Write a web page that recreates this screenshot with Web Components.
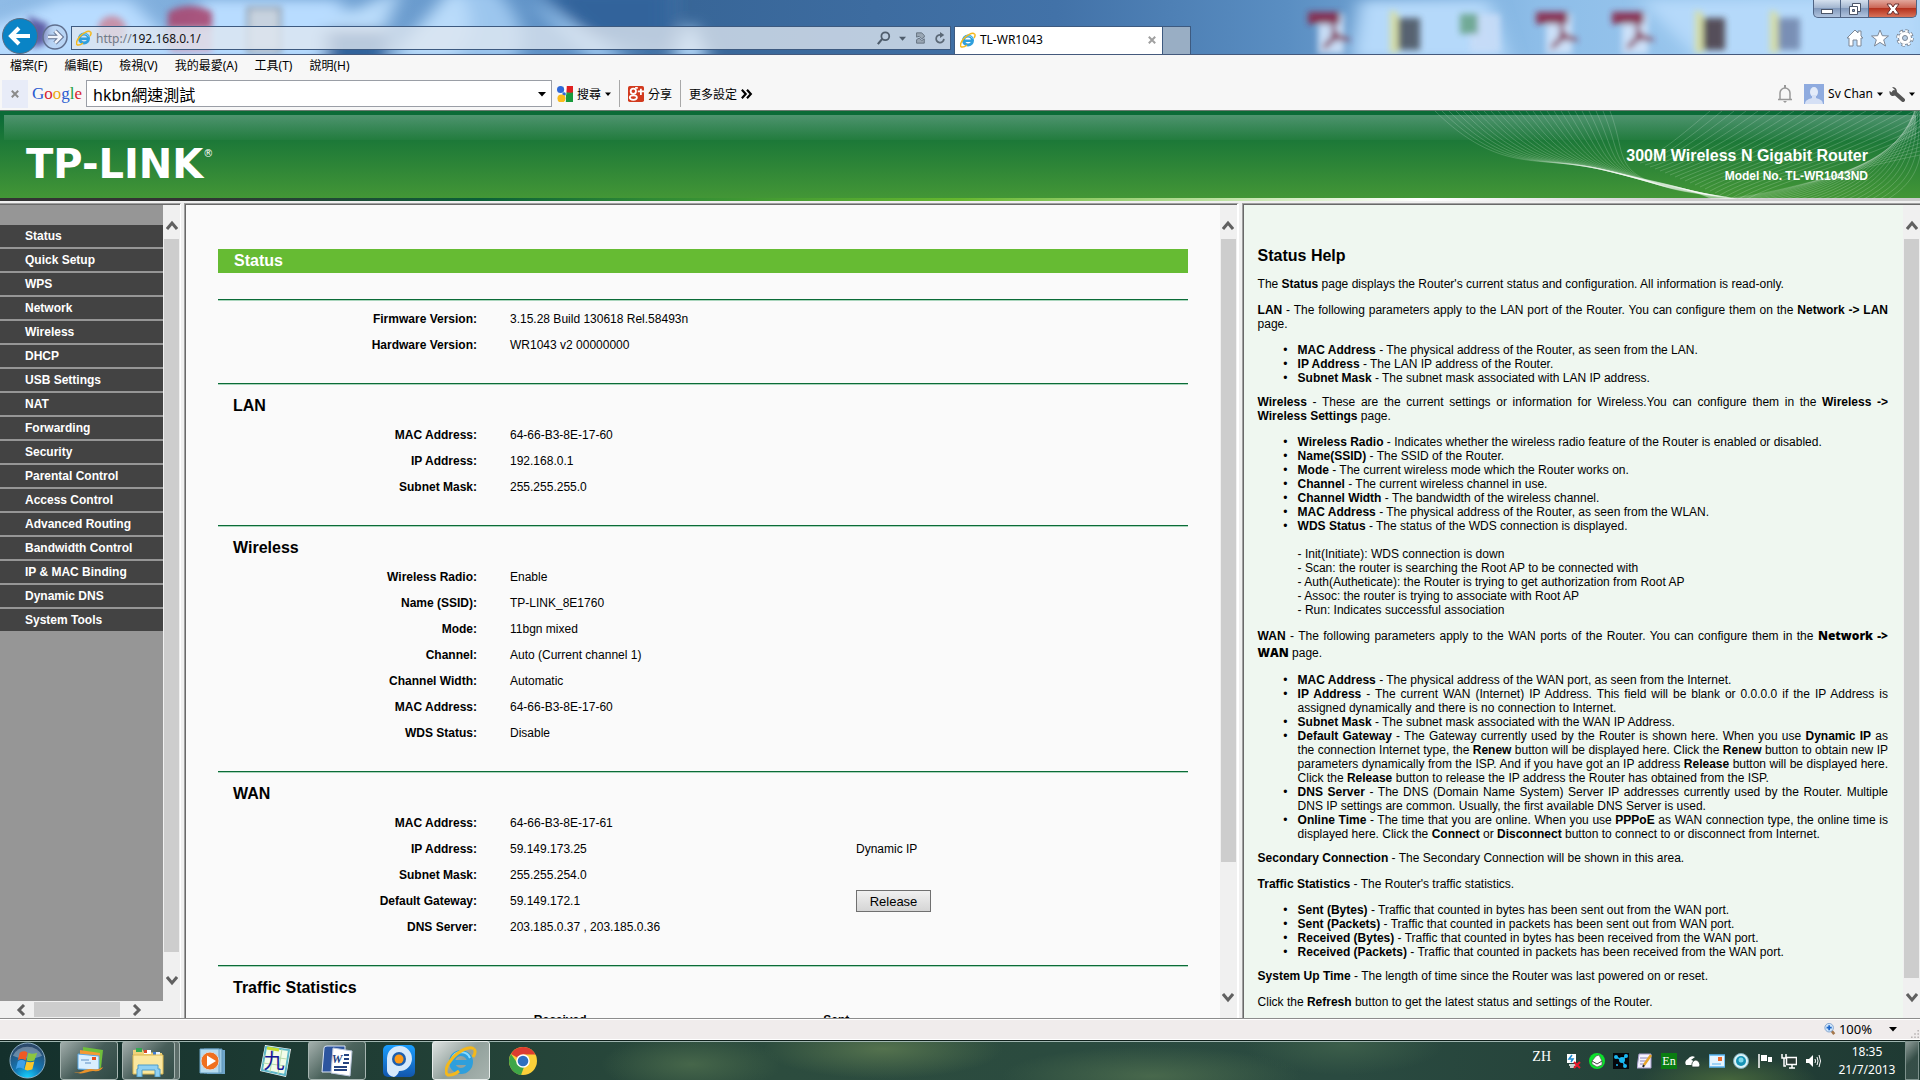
<!DOCTYPE html>
<html lang="zh-Hant">
<head>
<meta charset="utf-8">
<title>TL-WR1043</title>
<style>
  body {
    margin: 0;
    height: 100vh;
    display: flex;
    flex-direction: column;
    overflow: hidden;
    background: #f0f0f0;
    color: #000;
    font: 12px "Liberation Sans", "Noto Sans CJK TC", sans-serif;
    --ui: "Noto Sans", "Noto Sans CJK TC", sans-serif;
  }
  .frames {
    flex: 1;
    min-height: 0;
    display: flex;
    gap: 3px;
    padding-top: 2px;
  }
  .nav-frame { flex: 0 0 181px; }
  .main-frame { flex: 1054 1 0; border-right: 2px solid #fff; }
  .help-frame { flex: 679 1 0; }
</style>
</head>
<body>
  <browser-titlebar url="192.168.0.1/" tab="TL-WR1043"></browser-titlebar>
  <menu-bar items="檔案(F),編輯(E),檢視(V),我的最愛(A),工具(T),說明(H)"></menu-bar>
  <google-toolbar query="hkbn網速測試" user="Sv Chan"></google-toolbar>
  <router-banner>
    <span slot="name">300M Wireless N Gigabit Router</span>
    <span slot="model">Model No. TL-WR1043ND</span>
  </router-banner>

  <div class="frames">
    <page-frame class="nav-frame" plain horizontal thumb="713" rest="15">
      <side-menu items="Status,Quick Setup,WPS,Network,Wireless,DHCP,USB Settings,NAT,Forwarding,Security,Parental Control,Access Control,Advanced Routing,Bandwidth Control,IP &amp; MAC Binding,Dynamic DNS,System Tools"></side-menu>
    </page-frame>

    <page-frame class="main-frame" thumb="623" rest="122">
      <status-page heading="Status">
        <status-section rows='[["Firmware Version:","3.15.28 Build 130618 Rel.58493n"],["Hardware Version:","WR1043 v2 00000000"]]'></status-section>
        <status-section heading="LAN" rows='[["MAC Address:","64-66-B3-8E-17-60"],["IP Address:","192.168.0.1"],["Subnet Mask:","255.255.255.0"]]'></status-section>
        <status-section heading="Wireless" rows='[["Wireless Radio:","Enable"],["Name (SSID):","TP-LINK_8E1760"],["Mode:","11bgn mixed"],["Channel:","Auto (Current channel 1)"],["Channel Width:","Automatic"],["MAC Address:","64-66-B3-8E-17-60"],["WDS Status:","Disable"]]'></status-section>
        <status-section heading="WAN" rows='[["MAC Address:","64-66-B3-8E-17-61"],["IP Address:","59.149.173.25","Dynamic IP"],["Subnet Mask:","255.255.254.0"],["Default Gateway:","59.149.172.1","Release","button"],["DNS Server:","203.185.0.37 , 203.185.0.36"]]'></status-section>
        <status-section heading="Traffic Statistics">
          <traffic-table></traffic-table>
        </status-section>
      </status-page>
    </page-frame>

    <page-frame class="help-frame" thumb="739" rest="6">
      <help-page></help-page>
    </page-frame>
  </div>

  <status-bar zoom="100%"></status-bar>
  <task-bar time="18:35" date="21/7/2013"></task-bar>

<script>
const IE = `<ellipse cx="16" cy="17" rx="9" ry="9" fill="none" stroke="#2f9fdc" stroke-width="6"/>
  <path d="M8 17.500H26" stroke="#2f9fdc" stroke-width="5"/>
  <path d="M7 14a9.500 9 0 0 1 18-1" fill="none" stroke="#8bdcff" stroke-width="2"/>
  <path d="M29 4C25 0 13 6 6 15S0 31 5 30c4 0 9-4 9-4" fill="none" stroke="#f4b81c" stroke-width="3"/>
  <path d="M29 4c2 2 1 5-1 8" fill="none" stroke="#f4b81c" stroke-width="3"/>`;

// name: [viewBox size, markup]
const ICONS = {
  ie: [32, IE],
  back: [36, `<circle cx="18" cy="18" r="17.500" fill="#0a84c6" stroke="#5b6b80"/><path d="M28 18H10M17 10l-8 8 8 8" fill="none" stroke="#fff" stroke-width="4"/>`],
  forward: [26, `<circle cx="13" cy="13" r="12" fill="#b9cbe6" fill-opacity=".4" stroke="#5f6f8e" stroke-width="1.500"/><path d="M6 13h13M13 7l6 6-6 6" fill="none" stroke="#5f6f8e" stroke-width="4.500"/><path d="M6 13h12M13 7l6 6-6 6" fill="none" stroke="#eef3fb" stroke-width="2.500"/>`],
  search: [16, `<circle cx="9.500" cy="6" r="4.500" fill="none" stroke="#4f5d6c" stroke-width="2"/><path d="M6 9l-5 6" stroke="#4f5d6c" stroke-width="2.500"/>`],
  down: [8, `<path d="M0 2h8L4 6.500z" fill="currentColor"/>`],
  compat: [14, `<path d="M3 6V1h6l3 3v2l-3 2-3-3zM3 13V9l3-2 3 3 3-2v5z" fill="#9aa7b5" stroke="#5d6b79"/>`],
  refresh: [14, `<path d="M11.500 8A4.500 4.500 0 1 1 8 3.500" fill="none" stroke="#5b6876" stroke-width="2"/><path d="M7 0l5 3.500L7 7z" fill="#5b6876"/>`],
  close: [10, `<path d="M1 1l8 8M9 1L1 9" stroke="currentColor" stroke-width="2.500"/>`],
  home: [18, `<path d="M1 9l8-8 3 3V2h3v5l2 2h-2v8h-4v-6H7v6H3V9z" fill="#fff" stroke="#7c8796"/>`],
  star: [18, `<path d="M9 1l2.300 5.700 6.200.3-4.800 3.800L14.500 17 9 13.400 3.500 17l1.800-6.200L.5 7l6.200-.3z" fill="#fff" stroke="#7c8796"/>`],
  gear: [18, `<circle cx="9" cy="9" r="7" fill="none" stroke="#7c8796" stroke-width="3.500" stroke-dasharray="3.300 2.200"/><circle cx="9" cy="9" r="6.500" fill="#fff" stroke="#7c8796"/><circle cx="9" cy="9" r="7" fill="none" stroke="#fff" stroke-width="2" stroke-dasharray="2.500 3"/><circle cx="9" cy="9" r="2.500" fill="#b9cfe6" stroke="#7c8796"/>`],
  min: [14, `<rect x="1.500" y="7.500" width="11" height="4" fill="#fff" stroke="#4b5568"/>`],
  restore: [14, `<path d="M4.500 1.500h8v8h-8z" fill="#fff" stroke="#4b5568"/><path d="M1.500 4.500h8v8h-8z" fill="#fff" stroke="#4b5568"/><path d="M4.500 7.500h2v2h-2z" fill="#8fa6c4" stroke="#4b5568"/>`],
  closewin: [14, `<path d="M1 2h4l2 3 2-3h4L9.500 7l3.500 5H9L7 9l-2 3H1l3.500-5z" fill="#fff" stroke="#6b3030"/>`],
  gsearch: [18, `<rect x="7" width="11" height="18" rx="1" fill="#2a9e46"/><path d="M8 0h10v8l-8-1z" fill="#e02020"/><path d="M7 0h4l-1 18H7z" fill="#fff"/><circle cx="4" cy="4" r="4" fill="#2f68d8"/><circle cx="8" cy="9" r="2" fill="#2f68d8"/><circle cx="5" cy="14" r="4.500" fill="#fbbc1c"/><path d="M10 10l8-3v11h-8z" fill="#189a3c"/>`],
  gplus: [18, `<rect width="18" height="18" rx="2" fill="#d23a1e"/><circle cx="6" cy="6" r="3" fill="none" stroke="#fff" stroke-width="2"/><ellipse cx="6" cy="13" rx="4" ry="2.500" fill="none" stroke="#fff" stroke-width="2"/><path d="M8 2h3M11 6h7M14.500 3v7" stroke="#fff" stroke-width="2"/>`],
  bell: [18, `<path d="M2 14.500h14M4 14V8a5 5 0 0 1 10 0v6" fill="none" stroke="#999" stroke-width="1.500"/><path d="M9 0v3" stroke="#999" stroke-width="2"/><path d="M7 16h4l-2 2z" fill="#999"/>`],
  avatar: [20, `<path d="M0 0h20v20H0z" fill="#8fabdf"/><ellipse cx="10" cy="8" rx="4" ry="5" fill="#e3ebf9"/><path d="M1 20c0-4 4-5 7-6v-3h4v3c3 1 7 2 7 6z" fill="#d5e0f5"/>`],
  wrench: [16, `<path d="M5 6l9 8" stroke="#555" stroke-width="4" stroke-linecap="round"/><path d="M3 1l3 3-2 3-3.500-2C0 9 3 11 6 9.500S9 1 3 1z" fill="#555"/>`],
  more: [14, `<path d="M1 2l4.500 5L1 12M7 2l4.500 5L7 12" fill="none" stroke="#000" stroke-width="2.500"/>`],
  up: [12, `<path d="M1 9l5-6 5 6" fill="none" stroke="#606060" stroke-width="3"/>`],
  dn: [12, `<path d="M1 3l5 6 5-6" fill="none" stroke="#606060" stroke-width="3"/>`],
  left: [12, `<path d="M9 1L4 6l5 5" fill="none" stroke="#606060" stroke-width="3"/>`],
  right: [12, `<path d="M3 1l5 5-5 5" fill="none" stroke="#606060" stroke-width="3"/>`],
  zoom: [14, `<path d="M8 8l4 5" stroke="#a5784c" stroke-width="3"/><circle cx="6" cy="5.500" r="5" fill="#cfe6fb" stroke="#7a9cc8"/><path d="M3 5.500h6M6 2.500v6" stroke="#1e66c8" stroke-width="2"/>`],
  grip: [10, `<g fill="#b8b4b4"><path d="M8 0h2v2H8zM4 4h2v2H4zM8 4h2v2H8zM0 8h2v2H0zM4 8h2v2H4zM8 8h2v2H8z"/></g>`],
  start: [38, `<defs><radialGradient id="o" cx=".5" cy="1" r=".9"><stop offset="0" stop-color="#16d4ff"/><stop offset=".45" stop-color="#1377b5"/><stop offset="1" stop-color="#2b4a6c"/></radialGradient></defs><circle cx="19" cy="19" r="18" fill="url(#o)" stroke="#8fb2c8"/><path d="M4 14a16 14 0 0 1 30 0c-8 4-22 4-30 0z" fill="#fff" opacity=".3"/><path d="M11 11c3-2 6-2 8 0l-2 8c-3-2-5-2-8 0z" fill="#ee5a24"/><path d="M20 11c3 2 6 1 9 0l-3 8c-3 1-5 1-8 0z" fill="#8cc63f"/><path d="M9 20c3-2 5-2 8 0l-2 8c-3-2-5-2-8 0z" fill="#3fa0e8"/><path d="M18 20c3 1 5 1 8 0l-2 8c-3 1-6 2-8 0z" fill="#fcc62a"/>`],
  mail: [32, `<path d="M10 2l20 3-2 18-18-3z" fill="#6fbf3c"/><path d="M7 5l20 3-2 16-18-3z" fill="#f39a34"/><path d="M5 9l21 2v14L5 24z" fill="#d9efff" stroke="#5aa9e6"/><path d="M19 12h4v3h-4z" fill="#e8501e"/><path d="M8 15h8M12 18h6" stroke="#5f8fc4"/><path d="M1 27c8 2 10-4 17-3 6 1 8 0 12-2-1 3-5 5-9 4-6-1-10 5-20 1z" fill="#e8922a"/>`],
  folder: [32, `<path d="M1 5l9-1 2 3 18 1v20H1z" fill="#efd27a"/><path d="M4 3h6v4H4z" fill="#34a853"/><path d="M12 5h7v4h-7z" fill="#fff"/><path d="M12 5h3v3h-3z" fill="#d84a2a"/><path d="M21 7h7v4h-7z" fill="#e9f4ff"/><path d="M21 7h3v3h-3z" fill="#3a7bd5"/><path d="M1 10h30v19H1z" fill="#fae79f" stroke="#dcb850"/><path d="M6 20h20v4h2v8h-5v-7H10v7H5v-8h1z" fill="#8fd0f3" stroke="#4f9cc8"/>`],
  wmp: [32, `<path d="M10 5h18v24H10z" fill="#6fa5c9"/><path d="M7 4h18v24H7z" fill="#9fcbe6" stroke="#5e94b8"/><path d="M3 4h19v24H3z" fill="#b7dcf0" stroke="#6ba3c7"/><circle cx="13" cy="16" r="9" fill="#f0701e" stroke="#d8d8d8"/><path d="M10 10.500l9 5.500-9 5.500z" fill="#fff"/>`],
  nine: [32, `<path d="M6 0l26 4-5 28-26-6z" fill="#fff"/><path d="M7 2l23 3-4 25-23-5z" fill="#f2fbe8" stroke="#5fb8c8" stroke-width="2"/><path d="M15 3l-4 24M23 4l-4 25M5 11l23 3M4 18l23 3" stroke="#b9dcae"/><path d="M8 3l12 2" stroke="#c4dc30" stroke-width="3"/><text x="15" y="23" text-anchor="middle" font-size="21" fill="#16169a" font-family="Noto Sans CJK TC">九</text>`],
  word: [32, `<path d="M3 3q0-2 3-2h18v26H1z" fill="#2d559f" stroke="#dce6f5"/><path d="M12 3l19 3-2 25-19-3z" fill="#fff" stroke="#b9c6dc"/><path d="M23 10h5M23 14h5M22 18h6M13 22h13M13 25h13" stroke="#24437f" stroke-width="2"/><text x="16" y="18" text-anchor="middle" font-size="12" font-weight="bold" font-style="italic" fill="#24437f" font-family="Liberation Serif">W</text>`],
  pp: [32, `<defs><linearGradient id="p" x2="0" y2="1"><stop stop-color="#1a9fff"/><stop offset="1" stop-color="#1256ac"/></linearGradient></defs><rect width="32" height="32" rx="5" fill="url(#p)"/><path d="M4 13a12.500 12.500 0 1 1 12 13q-1 4-5 6-6-1-7-6z" fill="#d6e9fb"/><circle cx="16" cy="14" r="7" fill="#1f5fae"/><circle cx="16" cy="14" r="4.500" fill="#ff9a16"/>`],
  chrome: [32, `<circle cx="16" cy="16" r="14" fill="#fbd039"/><path d="M16 16L4 9a14 14 0 0 1 24.500.5H16z" fill="#dd3c30"/><path d="M4 9l7 10 6 3-3 8A14 14 0 0 1 4 9z" fill="#3fa648"/><circle cx="16" cy="16" r="6.800" fill="#fff"/><circle cx="16" cy="16" r="5.300" fill="#2f6fc0"/>`],
  t1: [16, `<path d="M2 1h9v9H2z" fill="#fff"/><path d="M4 12h7M5 14h4" stroke="#fff" stroke-width="1.500"/><path d="M7 2L4 6h4l-2 3" fill="none" stroke="#1b8ad0" stroke-width="1.500"/><path d="M9 9l6 6M15 9l-6 6" stroke="#e8172a" stroke-width="2"/>`],
  t2: [16, `<circle cx="8" cy="8" r="8" fill="#0be02b"/><path d="M3 8l4-5 3-1 3 6v4l-5 2-5-3z" fill="#fff" stroke="#555" stroke-width=".7"/><path d="M3 8l5 3 5-3" fill="none" stroke="#444"/>`],
  t3: [16, `<path d="M0 0h16v16H0z" fill="#05080c"/><path d="M3 4l6 3 4-4M9 7l3 6" stroke="#19a8ea" stroke-width="1.500"/><circle cx="3" cy="4" r="2" fill="#19b8f0"/><circle cx="9" cy="7" r="3" fill="#19b8f0"/><circle cx="13" cy="3" r="2" fill="#19b8f0"/><circle cx="12" cy="13" r="2" fill="#19b8f0"/><circle cx="4" cy="12" r="1" fill="#19b8f0"/>`],
  t4: [16, `<path d="M2 1h12v14H0z" fill="#f5f3ff" stroke="#a79cc9"/><path d="M3 5h8M3 8h6M3 11h5" stroke="#8d86b8"/><path d="M14 2l-7 10" stroke="#e8a52a" stroke-width="2.500"/><path d="M7 12l-1 2" stroke="#222" stroke-width="2"/>`],
  t6: [16, `<path d="M1 12a4 4 0 0 1 2-6 5 5 0 0 1 7-2l-4 3q3 0 3 5z" fill="#fff"/><path d="M7 14q-1-5 3-7 4 0 5 5l-1 2z" fill="#fff" stroke="#2a3d36" stroke-width=".8"/>`],
  t7: [16, `<rect y="2" width="16" height="12" fill="#e4f4ff" stroke="#58b2ee" stroke-width="1.500"/><path d="M9 4h4v4H9z" fill="#ee6b2d"/><path d="M3 11h9" stroke="#58b2ee"/>`],
  t8: [16, `<circle cx="8" cy="8" r="7.500" fill="#d9f3f8" stroke="#7da8b5"/><circle cx="8" cy="8" r="5" fill="#1693b5"/><circle cx="8" cy="7" r="2.500" fill="#7fd8ea"/>`],
  t9: [16, `<path d="M2 1v14" stroke="#fff" stroke-width="1.500"/><path d="M4 2h6v6H4zM11 4h4v5h-4z" fill="#fff"/>`],
  t10: [16, `<path d="M5.500 4.500h10v7h-10z" fill="#2a3a34" stroke="#fff" stroke-width="1.500"/><path d="M8 15h6M11 12v3M1 1v4h4V1M3 5v8h2" fill="none" stroke="#fff" stroke-width="1.500"/>`],
  t11: [16, `<path d="M1 6h3l4-4v12l-4-4H1z" fill="#fff"/><path d="M10 6q1 2 0 4M12 4q2 4 0 8M14 2q3 6 0 12" fill="none" stroke="#fff"/>`]
};

class UiIcon extends HTMLElement {
  connectedCallback() {
    const [box, markup] = ICONS[this.getAttribute('name')];
    const size = this.getAttribute('size') || box;
    this.attachShadow({ mode: 'open' }).innerHTML = `
      <style>:host { display: block; flex: none; } svg { display: block; }</style>
      <svg width="${size}" height="${size}" viewBox="0 0 ${box} ${box}" aria-hidden="true">${markup}</svg>
    `;
  }
}
customElements.define('ui-icon', UiIcon);

// Blurred desktop seen through the window glass
class GlassBackdrop extends HTMLElement {
  connectedCallback() {
    const pdf = x => `<path d="M${x + 10} 14h26v40h-26z" fill="#d3e4fa"/><path d="M${x} 12h32v12h-32z" fill="#8a2846"/><path d="M${x + 25} 24q4 16-10 24M${x + 27} 32q4 8 14 8M${x + 18} 44q10-8 20-6" fill="none" stroke="#8a3050" stroke-width="4"/>`;
    const photo = (x, c) => `<path d="M${x} 10l8 3v40l-8 0z" fill="#d9dfa0"/><path d="M${x + 8} 18h22v32h-22z" fill="${c}"/>`;
    this.attachShadow({ mode: 'open' }).innerHTML = `
      <style>:host { display: block; position: absolute; inset: 0; overflow: hidden; } svg { display: block; width: 100%; height: 100%; }</style>
      <svg viewBox="0 0 1920 54" preserveAspectRatio="none">
        <defs>
          <linearGradient id="sky"><stop stop-color="#8fbbe6"/><stop offset=".3" stop-color="#5c8fc4"/><stop offset=".36" stop-color="#386698"/><stop offset=".55" stop-color="#4272a8"/><stop offset=".67" stop-color="#5a8ec2"/><stop offset=".8" stop-color="#8dbde8"/><stop offset="1" stop-color="#a9d2f4"/></linearGradient>
          <filter id="soft" x="-10%" y="-50%" width="120%" height="200%"><feGaussianBlur stdDeviation="9 6"/></filter>
          <filter id="near" x="-10%" y="-50%" width="120%" height="200%"><feGaussianBlur stdDeviation="3"/></filter>
        </defs>
        <path d="M0 0h1920v54H0z" fill="url(#sky)"/>
        <g filter="url(#soft)">
          <path d="M-20 30L60 0h70l60 60H-20zM200 0h140l30 60H180zM280 10q60-30 90 40l-40 20z" fill="#b8dcff"/>
          <path d="M330 20l70-30-30 80h-40zM455 60L490 0l-40-10-60 70z" fill="#b9dbfa"/>
          <path d="M325 30h60v40h-60zM540-10h130v55l-80-10z" fill="#33639b"/>
          <path d="M455-10q30 30 0 70h60q20-30-20-70zM530 0l60 60h40z" fill="#9cc6ee"/>
          <path d="M670 60l20-40 20 40zM1360 0h130l20 60H1350zM1640 0h280v60H1700z" fill="#b5d9fa"/>
        </g>
        <g filter="url(#near)" opacity=".9">
          <path d="M28 16l20 8-2 20-14 4z" fill="#54519c"/>
          <circle cx="112" cy="30" r="14" fill="#c88aa0"/>
          <path d="M168 12q22-12 44 0v34h-44z" fill="#a94a72"/><path d="M170 28h42v24h-42z" fill="#cba5c4"/>
          <path d="M248 8h32v44h-32z" fill="#c9d2dc" stroke="#8893a2" stroke-width="3"/>
          ${pdf(1308)}${photo(1390, '#4e5664')}<path d="M1470 14h30v38h-30z" fill="#c7dcf7"/><path d="M1460 14h18v20h-18z" fill="#6aa58c"/>
          ${pdf(1536)}${pdf(1612)}${photo(1695, '#4b3f48')}${photo(1770, '#7388ae')}
        </g>
      </svg>
    `;
  }
}
customElements.define('glass-backdrop', GlassBackdrop);

class BrowserTitlebar extends HTMLElement {
  connectedCallback() {
    this.attachShadow({ mode: 'open' }).innerHTML = `
      <style>
        :host { display: block; flex: none; position: relative; border-bottom: 1px solid #44597c; font: 12px var(--ui); }
        button { border: 0; padding: 0; background: none; color: inherit; display: flex; align-items: center; justify-content: center; }
        .caption, .row { position: relative; display: flex; }
        .caption { justify-content: flex-end; height: 18px; padding-right: 3px; }
        .win { height: 18px; border: 1px solid #4f6484; border-top: 0; background: linear-gradient(#d5e0ee, #9eb2cd 50%, #8299bb 50%, #b0c4df); width: 28px; }
        .win + .win { border-left: 0; }
        .win:first-child { border-radius: 0 0 0 5px; }
        .win.x { width: 48px; border-radius: 0 0 5px 0; background: linear-gradient(#e2a79c, #c9604f 50%, #b5321e 50%, #d8735a); }
        .row { height: 36px; align-items: flex-end; }
        .back { margin-left: 2px; }
        .forward { margin: 0 3px 4px 4px; }
        .address { flex: 884 1 0; display: flex; align-items: center; gap: 6px; height: 24px; box-sizing: border-box; margin-bottom: 4px; padding: 0 4px; border: 1px solid #3d5a80; background: rgba(223, 231, 240, .78); }
        .address label { flex: 1; display: flex; align-items: center; gap: 4px; }
        .scheme { color: #707a86; }
        .scheme + input { flex: 1; min-width: 0; margin-left: -4px; padding: 0; border: 0; background: none; font: inherit; color: #111; }
        .tools { display: flex; align-items: center; gap: 8px; color: #4f5d6c; }
        .tab { flex: 199 1 0; display: flex; align-items: center; gap: 4px; height: 28px; box-sizing: border-box; margin-left: 3px; padding: 0 6px 2px 5px; background: #fff; border: 1px solid #3d5a80; border-bottom: 0; }
        .tab span { flex: 1; }
        .tab button { color: #a0a0a0; }
        .new { width: 28px; height: 28px; background: #99aec4; border: 1px solid #3d5a80; border-left: 0; border-bottom: 0; }
        .right { flex: 735 1 0; display: flex; box-sizing: border-box; justify-content: flex-end; gap: 7px; padding: 0 6px 7px 0; }
      </style>
      <glass-backdrop></glass-backdrop>
      <div class="caption">
        <button class="win" aria-label="Minimize"><ui-icon name="min"></ui-icon></button>
        <button class="win" aria-label="Restore"><ui-icon name="restore"></ui-icon></button>
        <button class="win x" aria-label="Close window"><ui-icon name="closewin"></ui-icon></button>
      </div>
      <div class="row">
        <button class="back" aria-label="Back"><ui-icon name="back"></ui-icon></button>
        <button class="forward" aria-label="Forward"><ui-icon name="forward"></ui-icon></button>
        <div class="address">
          <label><ui-icon name="ie" size="16"></ui-icon><span class="scheme">http://</span><input type="text" aria-label="Address" value="${this.getAttribute('url')}"></label>
          <div class="tools">
            <button aria-label="Search"><ui-icon name="search" size="14"></ui-icon></button>
            <button aria-label="Search options"><ui-icon name="down" size="7"></ui-icon></button>
            <button aria-label="Compatibility view"><ui-icon name="compat" size="12"></ui-icon></button>
            <button aria-label="Refresh"><ui-icon name="refresh" size="12"></ui-icon></button>
          </div>
        </div>
        <div class="tab"><ui-icon name="ie" size="16"></ui-icon><span>${this.getAttribute('tab')}</span><button aria-label="Close tab"><ui-icon name="close" size="8"></ui-icon></button></div>
        <button class="new" aria-label="New tab"></button>
        <div class="right">
          <button aria-label="Home"><ui-icon name="home"></ui-icon></button>
          <button aria-label="Favorites"><ui-icon name="star"></ui-icon></button>
          <button aria-label="Tools"><ui-icon name="gear"></ui-icon></button>
        </div>
      </div>
    `;
  }
}
customElements.define('browser-titlebar', BrowserTitlebar);

class MenuBar extends HTMLElement {
  connectedCallback() {
    const items = this.getAttribute('items').split(',');
    this.attachShadow({ mode: 'open' }).innerHTML = `
      <style>
        :host { display: flex; flex: none; gap: 17px; padding-left: 10px; height: 22px; align-items: center; background: #f7f7f7; }
        button { border: 0; padding: 0; background: none; font: 12px/20px var(--ui); }
      </style>
      ${items.map(item => `<button>${item}</button>`).join('')}
    `;
  }
}
customElements.define('menu-bar', MenuBar);

class GoogleToolbar extends HTMLElement {
  connectedCallback() {
    this.attachShadow({ mode: 'open' }).innerHTML = `
      <style>
        :host { display: flex; flex: none; align-items: center; height: 33px; padding: 0 5px 0 2px; background: #f7f7f7; font: 12px var(--ui); }
        button { border: 0; padding: 0; background: none; font: inherit; display: flex; align-items: center; gap: 4px; }
        .x { width: 26px; height: 28px; justify-content: center; background: #e8ecf8; color: #8b8b8b; }
        .logo { width: 54px; margin-left: 4px; font: 17px "Liberation Serif", serif; }
        .b { color: #2a5bd0; } .r { color: #d8232f; } .y { color: #eca90e; } .g { color: #20a045; }
        .box { display: flex; align-items: center; flex: 0 1 466px; height: 27px; box-sizing: border-box; padding: 0 5px 0 6px; border: 1px solid #9a9ea6; background: #fff; }
        input { flex: 1; min-width: 0; border: 0; padding: 0; background: none; font: 16px var(--ui); }
        .find { margin-left: 5px; }
        .sep { width: 1px; height: 27px; margin: 0 8px; background: #a8a8a8; }
        .space { flex: 1; }
        .user { margin: 0 6px 0 10px; }
      </style>
      <button class="x" aria-label="Close toolbar"><ui-icon name="close" size="8"></ui-icon></button>
      <span class="logo"><span class="b">G</span><span class="r">o</span><span class="y">o</span><span class="b">g</span><span class="g">l</span><span class="r">e</span></span>
      <div class="box"><input type="text" aria-label="Google search" value="${this.getAttribute('query')}"><button aria-label="History"><ui-icon name="down"></ui-icon></button></div>
      <button class="find"><ui-icon name="gsearch" size="16"></ui-icon>搜尋<ui-icon name="down" size="6"></ui-icon></button>
      <span class="sep"></span>
      <button><ui-icon name="gplus" size="16"></ui-icon>分享</button>
      <span class="sep"></span>
      <button>更多設定<ui-icon name="more" size="12"></ui-icon></button>
      <span class="space"></span>
      <button aria-label="Notifications"><ui-icon name="bell"></ui-icon></button>
      <button class="user"><ui-icon name="avatar"></ui-icon>${this.getAttribute('user')}<ui-icon name="down" size="6"></ui-icon></button>
      <button aria-label="Options"><ui-icon name="wrench"></ui-icon><ui-icon name="down" size="6"></ui-icon></button>
    `;
  }
}
customElements.define('google-toolbar', GoogleToolbar);

class RouterBanner extends HTMLElement {
  connectedCallback() {
    let lines = '';
    for (let i = 0; i < 26; i++) {
      const top = 5 + i * 7;
      lines += `<path d="M${top} 0C${70 + i * 5} ${64 - i} ${110 + i * 3} ${44 + i / 2} ${170 + i * 2} ${58 + i / 2}S${255 + i} ${76 + i / 4} ${282 + i} 88"/>`;
    }
    for (let i = 0; i < 22; i++) {
      lines += `<path d="M${280 + i * 12} 0C${240 + i * 9} ${34 + i} ${225 + i * 6} ${46 + i} ${205 + i * 5} ${50 + i * 2}"/>`;
      lines += `<path d="M${290 + i * 8} 88C${350 + i * 7} ${84 - i} ${410 + i * 4} ${60 - i} 490 ${44 - i * 4}"/>`;
    }
    this.attachShadow({ mode: 'open' }).innerHTML = `
      <style>
        :host { display: block; flex: none; color: #fff; font-weight: bold; }
        .banner { position: relative; display: flex; justify-content: space-between; align-items: center; height: 87px; padding: 0 52px 0 26px; border-top: 1px solid #6c7a70; background: linear-gradient(#0b6b37 4px, #1c7838 29px, #439636); }
        .gloss { position: absolute; inset: 4px 4px auto; height: 25px; background: linear-gradient(rgba(255, 255, 255, .28), rgba(255, 255, 255, .03)); }
        svg { position: absolute; right: 0; top: 0; }
        .logo { position: relative; display: flex; align-items: flex-start; padding-top: 18px; font: bold 40px/40px "DejaVu Sans", sans-serif; }
        sup { font: 10px/20px "DejaVu Sans", sans-serif; }
        .info { position: relative; padding-top: 23px; text-align: right; }
        .name { font-size: 16px; line-height: 20px; }
        .model { font-size: 12px; line-height: 20px; }
        .strip { height: 3px; background: linear-gradient(90deg, #333 10%, #0b5f37 25%, #2f8a35 34%, #66b82e 50%, #c8e6b0 65%, #fff 74%, #ccc 88%); }
      </style>
      <div class="banner">
        <div class="gloss"></div>
        <svg width="490" height="88" viewBox="0 0 490 88" fill="none" stroke="#fff" stroke-opacity=".18" aria-hidden="true">${lines}</svg>
        <div class="logo">TP-LINK<sup>®</sup></div>
        <div class="info">
          <div class="name"><slot name="name"></slot></div>
          <div class="model"><slot name="model"></slot></div>
        </div>
      </div>
      <div class="strip"></div>
    `;
  }
}
customElements.define('router-banner', RouterBanner);

// Frame with a sunken edge and its own scroll bars
class PageFrame extends HTMLElement {
  connectedCallback() {
    const across = this.hasAttribute('horizontal') ? `
      <div class="bar across">
        <button aria-label="Scroll left"><ui-icon name="left"></ui-icon></button>
        <span class="thumb"></span>
        <button aria-label="Scroll right"><ui-icon name="right"></ui-icon></button>
      </div>` : '';
    this.attachShadow({ mode: 'open' }).innerHTML = `
      <style>
        :host { display: flex; flex-direction: column; min-width: 0; box-sizing: border-box; border: 1px solid #a0a0a0; border-width: 1px 0 0 1px; background: #f0f0f0; }
        :host([plain]) { border-left: 0; border-right: 1px solid #fff; }
        .view { flex: 1; min-height: 0; display: flex; border: 1px solid #696969; border-width: 1px 0 0 1px; }
        :host([plain]) .view { border-left: 0; }
        .content { flex: 1; min-width: 0; overflow: hidden; }
        .bar { display: flex; flex: 0 0 17px; background: #f0f0f0; }
        .down { flex-direction: column; }
        button { border: 0; padding: 0; background: none; display: flex; align-items: center; justify-content: center; flex: 0 0 34px; }
        .down button:first-child { padding-top: 8px; }
        .down button:last-child { padding-bottom: 8px; }
        .across button:first-child { padding-left: 8px; }
        .thumb { flex: ${this.getAttribute('thumb')} 1 0; margin: 0 1px; background: #cdcdcd; }
        .rest { flex: ${this.getAttribute('rest')} 1 0; }
        .across { padding-right: 26px; }
        .across .thumb { flex: 1; margin: 1px 0; }
      </style>
      <div class="view">
        <div class="content"><slot></slot></div>
        <div class="bar down">
          <button aria-label="Scroll up"><ui-icon name="up"></ui-icon></button>
          <span class="thumb"></span><span class="rest"></span>
          <button aria-label="Scroll down"><ui-icon name="dn"></ui-icon></button>
        </div>
      </div>
      ${across}
    `;
  }
}
customElements.define('page-frame', PageFrame);

class SideMenu extends HTMLElement {
  connectedCallback() {
    const items = this.getAttribute('items').split(',');
    this.attachShadow({ mode: 'open' }).innerHTML = `
      <style>
        :host { display: block; box-sizing: border-box; height: 100%; padding-top: 20px; background: #969696; }
        nav { display: flex; flex-direction: column; gap: 2px; }
        a { padding-left: 25px; background: #434343; color: #fff; font-weight: bold; line-height: 22px; text-decoration: none; }
      </style>
      <nav>${items.map(item => `<a href="#">${item.replace('&', '&amp;')}</a>`).join('')}</nav>
    `;
  }
}
customElements.define('side-menu', SideMenu);

class StatusPage extends HTMLElement {
  connectedCallback() {
    this.attachShadow({ mode: 'open' }).innerHTML = `
      <style>
        :host { display: block; box-sizing: border-box; min-height: 100%; padding: 44px 32px 0; background: #fafafa; }
        h1 { margin: 0 0 26px; padding-left: 16px; background: #66bb33; color: #fff; font-size: 16px; line-height: 24px; }
      </style>
      <h1>${this.getAttribute('heading')}</h1>
      <slot></slot>
    `;
  }
}
customElements.define('status-page', StatusPage);

class StatusSection extends HTMLElement {
  connectedCallback() {
    const heading = this.getAttribute('heading');
    const rows = JSON.parse(this.getAttribute('rows') || '[]');
    this.attachShadow({ mode: 'open' }).innerHTML = `
      <style>
        :host { display: block; padding: 6px 0 25px; border-top: 1px solid #0b6b37; box-shadow: inset 0 1px #a9d5bc; }
        h2 { margin: 0; padding: 6px 0 7px 15px; font-size: 16px; line-height: 19px; }
        table { width: 100%; border-spacing: 0; table-layout: fixed; }
        th, td { height: 26px; padding: 0; line-height: 14px; text-align: left; }
        th { width: 259px; text-align: right; }
        td.value { width: 346px; padding-left: 33px; }
        button { display: block; width: 75px; height: 22px; padding: 0; border: 1px solid #707070; background: linear-gradient(#f0f0f0, #d5d5d5); font: 13px "Liberation Sans", sans-serif; color: #000; }
      </style>
      ${heading ? `<h2>${heading}</h2>` : ''}
      ${rows.length ? `<table>${rows.map(row => this.renderRow(row)).join('')}</table>` : ''}
      <slot></slot>
    `;
  }

  renderRow([label, value, extra = '', kind]) {
    const last = kind === 'button' ? `<button>${extra}</button>` : extra;
    return `<tr><th scope="row">${label}</th><td class="value">${value}</td><td>${last}</td></tr>`;
  }
}
customElements.define('status-section', StatusSection);

class TrafficTable extends HTMLElement {
  connectedCallback() {
    this.attachShadow({ mode: 'open' }).innerHTML = `
      <style>
        :host { display: block; }
        table { width: 78%; border-spacing: 0; table-layout: fixed; }
        th { height: 32px; padding: 0; line-height: 14px; }
        th:first-child { width: 27%; }
      </style>
      <table><tr><th></th><th scope="col">Received</th><th scope="col">Sent</th></tr></table>
    `;
  }
}
customElements.define('traffic-table', TrafficTable);

class HelpPage extends HTMLElement {
  connectedCallback() {
    this.attachShadow({ mode: 'open' }).innerHTML = `
      <style>
        :host { display: block; box-sizing: border-box; min-height: 100%; padding: 41px 15px 0 14px; background: #eff7f0; line-height: 14px; text-align: justify; }
        h1 { margin: 0 0 11px; font-size: 16px; line-height: 20px; }
        p { margin: 0 0 12px; }
        ul { margin: 0 0 10px; padding-left: 40px; list-style-type: "•\u00a0\u00a0\u00a0"; }
        .heavy { font: 800 12px/17px "Open Sans", sans-serif; }
      </style>
      <h1>Status Help</h1>
      <p>The <b>Status</b> page displays the Router's current status and configuration. All information is read-only.</p>
      <p><b>LAN</b> - The following parameters apply to the LAN port of the Router. You can configure them on the <b>Network -&gt; LAN</b> page.</p>
      <ul>
        <li><b>MAC Address</b> - The physical address of the Router, as seen from the LAN.</li>
        <li><b>IP Address</b> - The LAN IP address of the Router.</li>
        <li><b>Subnet Mask</b> - The subnet mask associated with LAN IP address.</li>
      </ul>
      <p><b>Wireless</b> - These are the current settings or information for Wireless.You can configure them in the <b>Wireless -&gt; Wireless Settings</b> page.</p>
      <ul>
        <li><b>Wireless Radio</b> - Indicates whether the wireless radio feature of the Router is enabled or disabled.</li>
        <li><b>Name(SSID)</b> - The SSID of the Router.</li>
        <li><b>Mode</b> - The current wireless mode which the Router works on.</li>
        <li><b>Channel</b> - The current wireless channel in use.</li>
        <li><b>Channel Width</b> - The bandwidth of the wireless channel.</li>
        <li><b>MAC Address</b> - The physical address of the Router, as seen from the WLAN.</li>
        <li><b>WDS Status</b> - The status of the WDS connection is displayed.<br><br>
          - Init(Initiate): WDS connection is down<br>
          - Scan: the router is searching the Root AP to be connected with<br>
          - Auth(Autheticate): the Router is trying to get authorization from Root AP<br>
          - Assoc: the router is trying to associate with Root AP<br>
          - Run: Indicates successful association</li>
      </ul>
      <p><b>WAN</b> - The following parameters apply to the WAN ports of the Router. You can configure them in the <b class="heavy">Network -&gt; WAN</b> page.</p>
      <ul>
        <li><b>MAC Address</b> - The physical address of the WAN port, as seen from the Internet.</li>
        <li><b>IP Address</b> - The current WAN (Internet) IP Address. This field will be blank or 0.0.0.0 if the IP Address is assigned dynamically and there is no connection to Internet.</li>
        <li><b>Subnet Mask</b> - The subnet mask associated with the WAN IP Address.</li>
        <li><b>Default Gateway</b> - The Gateway currently used by the Router is shown here. When you use <b>Dynamic IP</b> as the connection Internet type, the <b>Renew</b> button will be displayed here. Click the <b>Renew</b> button to obtain new IP parameters dynamically from the ISP. And if you have got an IP address <b>Release</b> button will be displayed here. Click the <b>Release</b> button to release the IP address the Router has obtained from the ISP.</li>
        <li><b>DNS Server</b> - The DNS (Domain Name System) Server IP addresses currently used by the Router. Multiple DNS IP settings are common. Usually, the first available DNS Server is used.</li>
        <li><b>Online Time</b> - The time that you are online. When you use <b>PPPoE</b> as WAN connection type, the online time is displayed here. Click the <b>Connect</b> or <b>Disconnect</b> button to connect to or disconnect from Internet.</li>
      </ul>
      <p><b>Secondary Connection</b> - The Secondary Connection will be shown in this area.</p>
      <p><b>Traffic Statistics</b> - The Router's traffic statistics.</p>
      <ul>
        <li><b>Sent (Bytes)</b> - Traffic that counted in bytes has been sent out from the WAN port.</li>
        <li><b>Sent (Packets)</b> - Traffic that counted in packets has been sent out from WAN port.</li>
        <li><b>Received (Bytes)</b> - Traffic that counted in bytes has been received from the WAN port.</li>
        <li><b>Received (Packets)</b> - Traffic that counted in packets has been received from the WAN port.</li>
      </ul>
      <p><b>System Up Time</b> - The length of time since the Router was last powered on or reset.</p>
      <p>Click the <b>Refresh</b> button to get the latest status and settings of the Router.</p>
    `;
  }
}
customElements.define('help-page', HelpPage);

class StatusBar extends HTMLElement {
  connectedCallback() {
    this.attachShadow({ mode: 'open' }).innerHTML = `
      <style>
        :host { display: flex; flex: none; justify-content: flex-end; align-items: center; height: 20px; border-top: 1px solid #8c8c8c; border-bottom: 1px solid #fff; background: #f0ecec; box-shadow: inset 0 1px #fff; font: 13px var(--ui); }
        button { display: flex; align-items: center; gap: 3px; border: 0; padding: 0; background: none; font: inherit; }
        ui-icon[name="down"] { margin-left: 14px; }
        ui-icon[name="grip"] { align-self: flex-end; margin: 0 1px 1px 14px; }
      </style>
      <button><ui-icon name="zoom" size="12"></ui-icon>${this.getAttribute('zoom')}<ui-icon name="down"></ui-icon></button>
      <ui-icon name="grip" size="8"></ui-icon>
    `;
  }
}
customElements.define('status-bar', StatusBar);

class TaskBar extends HTMLElement {
  connectedCallback() {
    const apps = [['mail', 'open'], ['folder', 'open group'], ['wmp', ''], ['nine', ''], ['word', 'open'], ['pp', ''], ['ie', 'open active'], ['chrome', '']];
    const tray = ['t1', 't2', 't3', 't4', 'en', 't6', 't7', 't8', 't9', 't10', 't11'];
    this.attachShadow({ mode: 'open' }).innerHTML = `
      <style>
        :host { display: flex; flex: none; align-items: stretch; height: 39px; border-top: 1px solid #10201c; box-shadow: inset 0 1px #9fb5b0; color: #fff; font: 12px var(--ui);
          background: radial-gradient(ellipse 90px 30px at 36% 60%, #46664a, transparent), radial-gradient(ellipse 120px 30px at 46% 20%, #54724e, transparent), radial-gradient(ellipse 150px 30px at 60% 90%, #48684c, transparent), radial-gradient(ellipse 100px 30px at 70% 10%, #3c5e4a, transparent), radial-gradient(ellipse 90px 24px at 90% 100%, #46663c, transparent), linear-gradient(90deg, #14302c, #2c4c3e 40%, #2a4a40 70%, #1f3a33); }
        button { display: flex; align-items: center; justify-content: center; box-sizing: border-box; border: 0; padding: 0; background: none; color: inherit; font: inherit; }
        .start { width: 54px; }
        .apps { display: flex; gap: 4px; padding-left: 6px; }
        .apps button { width: 58px; border: 1px solid transparent; border-radius: 3px; }
        .apps .open { border-color: #a6b5b1; background: linear-gradient(135deg, rgba(255, 255, 255, .6), rgba(255, 255, 255, .2) 50%, rgba(255, 255, 255, .1)); }
        .apps .active { border-color: #e6ecea; background: linear-gradient(135deg, rgba(255, 255, 255, .85), rgba(255, 255, 255, .5) 50%, rgba(255, 255, 255, .6)); }
        .apps .group { padding-right: 6px; box-shadow: inset -4px 0 rgba(20, 40, 36, .5), inset -5px 0 #a6b5b1; }
        .tray { margin: 0 8px 0 auto; display: flex; align-items: center; gap: 8px; }
        .lang { margin-right: 6px; font: 14px/24px "Liberation Serif", serif; align-self: flex-start; padding-top: 4px; }
        .en { width: 16px; height: 16px; background: #0a7d12; font: 12px/16px "Liberation Serif", serif; }
        .clock { width: 76px; line-height: 18px; flex-direction: column; }
        .show { width: 14px; margin-right: 1px; border: 1px solid #7d918c; background: linear-gradient(135deg, rgba(255, 255, 255, .5), rgba(255, 255, 255, .1) 50%); }
      </style>
      <button class="start" aria-label="Start"><ui-icon name="start" size="37"></ui-icon></button>
      <div class="apps">${apps.map(([name, state]) => `<button class="${state}" aria-label="${name}"><ui-icon name="${name}" size="32"></ui-icon></button>`).join('')}</div>
      <div class="tray">
        <span class="lang">ZH</span>
        ${tray.map(name => name === 'en' ? '<button class="en">En</button>' : `<ui-icon name="${name}"></ui-icon>`).join('')}
      </div>
      <button class="clock"><span>${this.getAttribute('time')}</span><span>${this.getAttribute('date')}</span></button>
      <button class="show" aria-label="Show desktop"></button>
    `;
  }
}
customElements.define('task-bar', TaskBar);
</script>
</body>
</html>
